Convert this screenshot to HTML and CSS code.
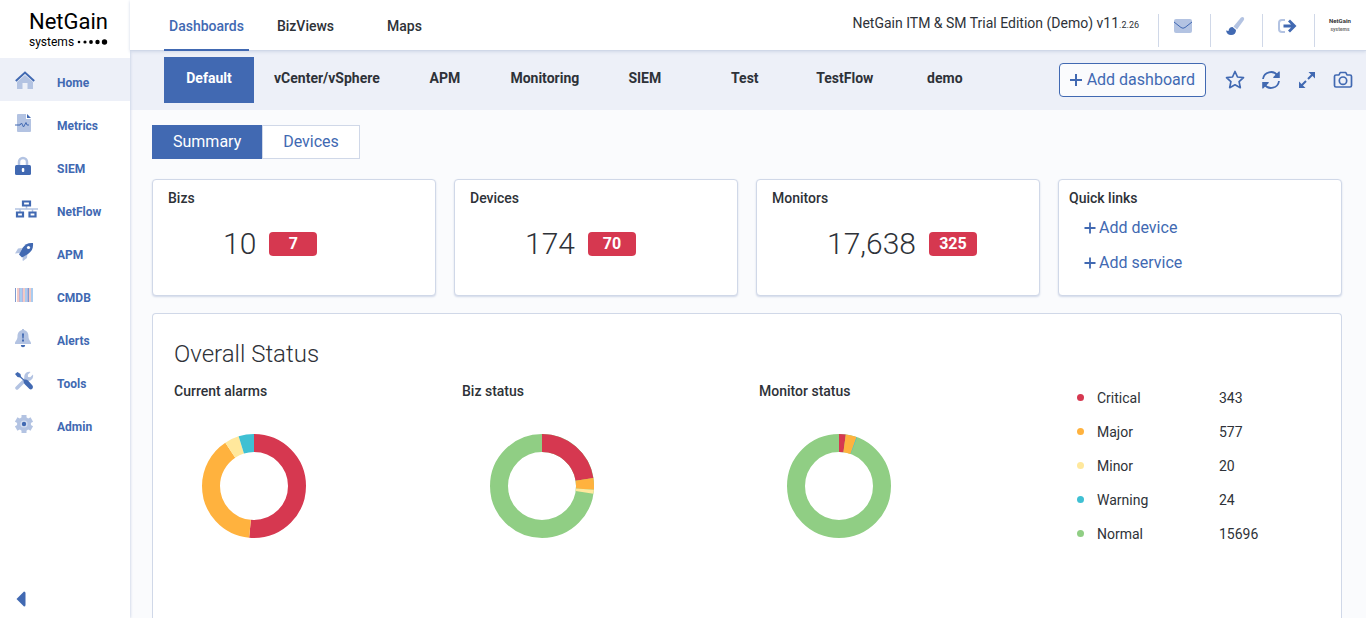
FILE: index.html
```html
<!DOCTYPE html>
<html lang="en">
<head>
    <meta charset="UTF-8">
    <meta name="viewport" content="width=device-width, initial-scale=1.0">
    <title>NetGain Dashboards</title>
    <link rel="stylesheet" href="styles.css">
</head>
<body>
    <aside class="sidebar">
        <a class="logo" href="#">
            <span class="logo-name">NetGain</span>
            <span class="logo-sub">systems
                <svg width="31" height="6" viewBox="0 0 31 6">
                    <circle cx="2" cy="3" r="1.3"/><circle cx="8" cy="3" r="1.6"/><circle cx="14" cy="3" r="1.9"/><circle cx="20.500" cy="3" r="2.2"/><circle cx="27.500" cy="3" r="2.7"/>
                </svg>
            </span>
        </a>
        <nav class="menu">
            <a class="active" href="#">
                <svg width="22" height="20" viewBox="0 0 22 20"><path class="soft" d="M10 5 18 12V19H12.500V13H7.500V19H2V12Z"/><path class="line" stroke-width="2" d="M.8 11 10 2.500 19.200 11"/></svg>
                <span>Home</span>
            </a>
            <a href="#">
                <svg width="22" height="20" viewBox="0 0 22 20"><path class="soft" d="M3 1H11V6H16V18a1 1 0 0 1-1 1H3a1 1 0 0 1-1-1V2a1 1 0 0 1 1-1Z"/><path class="solid" d="M12 1 16 5H12Z"/><path class="line" d="M0 12H5L6.500 10 8.500 14 11 9.500 12 12H14"/></svg>
                <span>Metrics</span>
            </a>
            <a href="#">
                <svg width="22" height="20" viewBox="0 0 22 20"><path class="softline" stroke-width="2.500" d="M4 9V6a4 4 0 0 1 8 0V9"/><rect class="solid" y="9" width="16" height="10" rx="1.500"/><rect fill="#fff" x="6.800" y="12" width="2.500" height="4" rx="1"/></svg>
                <span>SIEM</span>
            </a>
            <a href="#">
                <svg width="23" height="20" viewBox="0 0 23 20"><path class="softline" stroke-width="1.500" d="M0 10H23M11.500 7V10M5 10V13M17.500 10V13"/><path class="line" stroke-width="2.200" d="M8 2.500H15V6.500H8ZM2 13.500H8V17.500H2ZM14.500 13.500H20.500V17.500H14.500Z"/></svg>
                <span>NetFlow</span>
            </a>
            <a href="#">
                <svg width="22" height="20" viewBox="0 0 22 20"><path class="soft" d="M7 6 3 6.500 0 11.500 5 11ZM8 14 12.500 11 12 16 8 19 7.500 18Z"/><path class="solid" d="M18 1C13 .5 10 2.500 7.500 6L4 12.500 7 15.500 13 12C17 9 18.500 6 18 1Z"/><circle fill="#fff" cx="13.500" cy="5.500" r="1.600"/></svg>
                <span>APM</span>
            </a>
            <a href="#">
                <svg width="22" height="20" viewBox="0 0 22 20"><path stroke="#7f9bd0" d="M.5 3V17M13.500 3V17"/><path stroke="#f3c9c4" stroke-width="2" d="M3 3V17M9 3V17M15 3V17"/><path stroke="#a9ccf0" stroke-width="2" d="M6 3V17M11 3V17M17 3V17"/><path stroke="#b6b4dc" d="M4.500 3V17M7.500 3V17M12.500 3V17"/></svg>
                <span>CMDB</span>
            </a>
            <a href="#">
                <svg width="22" height="20" viewBox="0 0 22 20"><path class="soft" d="M7 2V1H9V2C12.500 3 13.500 5.500 13.500 8.500 13.500 12 16 13.500 16 15V16H0V15C0 13.500 2.500 12 2.500 8.500 2.500 5.500 3.500 3 7 2Z"/><path class="solid" d="M7 5.500H9L8.600 10.500H7.400ZM7 11.500H9V13.500H7ZM5.800 17H10.200A2.200 2.200 0 0 1 5.800 17Z"/></svg>
                <span>Alerts</span>
            </a>
            <a href="#">
                <svg width="22" height="20" viewBox="0 0 22 20"><path class="softline" stroke-width="3.500" stroke-linecap="round" d="M2 17 11 8"/><path class="soft" d="M15.500 1 12.800 3.800 13 6 15.200 6.200 18 3.500C19 8 15 11 11.500 9.500L9.500 7.500C8.500 3.500 11.500 0 15.500 1Z"/><path class="solid" d="M0 3 2.500 1 5.500 3 6 5.500 9 8.500Q11.500 8 13 9.500L17.500 14.500Q18.500 16 17.500 17.500 16 19 14.500 18L9.500 13Q8.500 11.500 8.500 9.500L5 6.500 2.500 6Z"/></svg>
                <span>Tools</span>
            </a>
            <a href="#">
                <svg width="22" height="20" viewBox="0 0 22 20"><circle class="soft" cx="9" cy="10" r="7"/><path class="softline" stroke-width="5" d="M9 1V19M1.200 5.500 16.800 14.500M1.200 14.500 16.800 5.500"/><circle cx="9" cy="10" r="3.600" fill="#d5def0"/><circle class="solid" cx="9" cy="10" r="2.200"/></svg>
                <span>Admin</span>
            </a>
        </nav>
        <button class="collapse" aria-label="Collapse menu">
            <svg width="10" height="16" viewBox="0 0 10 16"><path class="solid" d="M8 .5Q9.500 .5 9.500 2V14Q9.500 15.500 8 15.500L.5 8Z"/></svg>
        </button>
    </aside>

    <div class="page">
        <header class="topbar">
            <nav class="sections">
                <a class="active" href="#">Dashboards</a>
                <a href="#">BizViews</a>
                <a href="#">Maps</a>
            </nav>
            <p class="version">NetGain ITM &amp; SM Trial Edition (Demo) v11<small>.2.26</small></p>
            <div class="tools">
                <button aria-label="Messages">
                    <svg width="20" height="20" viewBox="0 0 20 20"><rect class="soft" x="1" y="3" width="18" height="14" rx="2"/><path class="line" d="M1 6 8 11.500Q10 13 12 11.500L19 6"/></svg>
                </button>
                <button aria-label="Theme">
                    <svg width="20" height="20" viewBox="0 0 20 20"><path class="soft" d="M16 1.500Q18 .5 19 2 19.500 3 18.500 4.500L12 13.500 8.500 10.500Z"/><path class="solid" d="M7.500 11 11 14Q11 19 6 19 2 19 1 14.500L3.500 15Q4 11 7.500 11Z"/></svg>
                </button>
                <button aria-label="Log out">
                    <svg width="20" height="20" viewBox="0 0 20 20"><path class="softline" stroke-width="2" d="M8 4H5A3 3 0 0 0 2 7V13A3 3 0 0 0 5 16H8"/><path class="line" stroke-width="2.800" d="M6.500 10H17M12 4.500 17.500 10 12 15.500"/></svg>
                </button>
                <button class="avatar" aria-label="Account">
                    <span>NetGain</span>
                    <small>systems</small>
                </button>
            </div>
        </header>

        <div class="subbar">
            <nav class="boards">
                <a class="active" href="#">Default</a>
                <a href="#">vCenter/vSphere</a>
                <a href="#">APM</a>
                <a href="#">Monitoring</a>
                <a href="#">SIEM</a>
                <a href="#">Test</a>
                <a href="#">TestFlow</a>
                <a href="#">demo</a>
            </nav>
            <button class="add-board">
                <svg width="14" height="14" viewBox="0 0 14 14"><path class="line" stroke-width="2" d="M7 1V13M1 7H13"/></svg>
                Add dashboard
            </button>
            <div class="actions">
                <button aria-label="Favourite">
                    <svg width="20" height="20" viewBox="0 0 20 20"><path class="line" stroke-width="1.700" stroke-linejoin="round" d="M10 1.500 12.500 7 18.500 7.700 14.100 11.700 15.300 17.700 10 14.800 4.700 17.700 5.900 11.700 1.500 7.700 7.500 7Z"/></svg>
                </button>
                <button aria-label="Refresh">
                    <svg width="20" height="20" viewBox="0 0 20 20"><path class="line" stroke-width="1.800" d="M2 9A8 8 0 0 1 16.500 5.500M18 11A8 8 0 0 1 3.500 14.500"/><path class="solid" d="M18.800 1.500V8H12.300V7L17.800 1.500ZM1.200 18.500V12H7.700V13L2.200 18.500Z"/></svg>
                </button>
                <button aria-label="Full screen">
                    <svg width="20" height="20" viewBox="0 0 20 20"><path class="line" stroke-width="2" d="M4 16 9 11M11 9 16 4"/><path class="solid" d="M11.500 2H18V8.500L16 6.500 13.500 4ZM8.500 18H2V11.500L4 13.500 6.500 16Z"/></svg>
                </button>
                <button aria-label="Snapshot">
                    <svg width="20" height="20" viewBox="0 0 20 20"><path class="line" stroke-width="1.700" stroke-linejoin="round" d="M3 5H6L7.200 2.500H12.800L14 5H17Q18.500 5 18.500 6.500V15.500Q18.500 17 17 17H3Q1.500 17 1.500 15.500V6.500Q1.500 5 3 5Z"/><circle class="line" stroke-width="1.700" cx="10" cy="10.700" r="3.700"/></svg>
                </button>
            </div>
        </div>

        <main>
            <div class="views">
                <button class="active">Summary</button>
                <button>Devices</button>
            </div>

            <div class="cards">
                <section class="card">
                    <h2>Bizs</h2>
                    <p class="count">10 <span class="badge">7</span></p>
                </section>
                <section class="card">
                    <h2>Devices</h2>
                    <p class="count">174 <span class="badge">70</span></p>
                </section>
                <section class="card">
                    <h2>Monitors</h2>
                    <p class="count">17,638 <span class="badge">325</span></p>
                </section>
                <section class="card links">
                    <h2>Quick links</h2>
                    <a href="#"><svg width="12" height="12" viewBox="0 0 12 12"><path class="line" stroke-width="1.800" d="M6 .5V11.500M.5 6H11.500"/></svg>Add device</a>
                    <a href="#"><svg width="12" height="12" viewBox="0 0 12 12"><path class="line" stroke-width="1.800" d="M6 .5V11.500M.5 6H11.500"/></svg>Add service</a>
                </section>
            </div>

            <section class="status">
                <h1>Overall Status</h1>
                <div class="charts">
                    <div>
                        <h2>Current alarms</h2>
                        <svg class="donut" viewBox="0 0 104 104">
                            <circle class="critical" cx="52" cy="52" r="43" pathLength="100" stroke-dasharray="51.5 100"/>
                            <circle class="major" cx="52" cy="52" r="43" pathLength="100" stroke-dasharray="39.2 100" stroke-dashoffset="-51.5"/>
                            <circle class="minor" cx="52" cy="52" r="43" pathLength="100" stroke-dasharray="4.5 100" stroke-dashoffset="-90.7"/>
                            <circle class="warning" cx="52" cy="52" r="43" pathLength="100" stroke-dasharray="4.8 100" stroke-dashoffset="-95.2"/>
                        </svg>
                    </div>
                    <div>
                        <h2>Biz status</h2>
                        <svg class="donut" viewBox="0 0 104 104">
                            <circle class="normal" cx="52" cy="52" r="43"/>
                            <circle class="critical" cx="52" cy="52" r="43" pathLength="100" stroke-dasharray="22.5 100"/>
                            <circle class="major" cx="52" cy="52" r="43" pathLength="100" stroke-dasharray="3.7 100" stroke-dashoffset="-22.5"/>
                            <circle class="minor" cx="52" cy="52" r="43" pathLength="100" stroke-dasharray="1.2 100" stroke-dashoffset="-26.2"/>
                        </svg>
                    </div>
                    <div>
                        <h2>Monitor status</h2>
                        <svg class="donut" viewBox="0 0 104 104">
                            <circle class="normal" cx="52" cy="52" r="43"/>
                            <circle class="critical" cx="52" cy="52" r="43" pathLength="100" stroke-dasharray="2.1 100"/>
                            <circle class="major" cx="52" cy="52" r="43" pathLength="100" stroke-dasharray="3.4 100" stroke-dashoffset="-2.1"/>
                            <circle class="warning" cx="52" cy="52" r="43" pathLength="100" stroke-dasharray="0.15 100" stroke-dashoffset="-5.5"/>
                        </svg>
                    </div>
                    <table class="legend">
                        <tr><td><i class="critical"></i></td><th scope="row">Critical</th><td>343</td></tr>
                        <tr><td><i class="major"></i></td><th scope="row">Major</th><td>577</td></tr>
                        <tr><td><i class="minor"></i></td><th scope="row">Minor</th><td>20</td></tr>
                        <tr><td><i class="warning"></i></td><th scope="row">Warning</th><td>24</td></tr>
                        <tr><td><i class="normal"></i></td><th scope="row">Normal</th><td>15696</td></tr>
                    </table>
                </div>
            </section>
        </main>
    </div>
</body>
</html>
```

FILE: styles.css
```css
*{
    box-sizing: border-box;
    margin: 0;
    padding: 0;
}

body{
    display: flex;
    min-height: 100vh;
    font-family: Roboto, sans-serif;
    font-size: 14px;
    color: #2e3238;
    background-color: #fafbfd;
}

a{
    color: #4169b2;
    text-decoration: none;
}

button{
    font: inherit;
    color: #4169b2;
    background: none;
    border: none;
    cursor: pointer;
}

svg{
    display: block;
    flex-shrink: 0;
}

h2{
    font-size: 14px;
    font-weight: 500;
    line-height: 18px;
}

/* two-tone icons */
.solid{
    fill: #4169b2;
}

.soft{
    fill: #b3c3e2;
}

.line{
    fill: none;
    stroke: #4169b2;
}

.softline{
    fill: none;
    stroke: #b3c3e2;
}

/* sidebar */
.sidebar{
    display: flex;
    flex-direction: column;
    flex-shrink: 0;
    width: 130px;
    background-color: #fff;
    box-shadow: 0 0 3px #b9c4dc;
    z-index: 1;
}

.logo{
    height: 58px;
    padding: 9px 0 0 29px;
    color: #000;
}

.logo-name{
    display: block;
    font-size: 22px;
    line-height: 26px;
}

.logo-sub{
    display: flex;
    align-items: center;
    gap: 3px;
    font-size: 12px;
    line-height: 14px;
}

.menu a{
    display: grid;
    grid-template-columns: 42px 1fr;
    align-items: center;
    height: 43px;
    padding-left: 15px;
    font-size: 12px;
    font-weight: 700;
}

.menu a.active{
    background-color: #edf0f8;
}

.menu span{
    padding-top: 6px;
}

.collapse{
    margin-top: auto;
    padding: 0 0 11px 16px;
    align-self: flex-start;
}

/* top bar */
.page{
    display: flex;
    flex-direction: column;
    flex: 1;
    min-width: 0;
}

.topbar{
    display: flex;
    height: 51px;
    padding-left: 34px;
    background-color: #fff;
    border-bottom: 1px solid #d0d8e8;
    box-shadow: 0 1px 3px #d0d8e8;
    z-index: 1;
}

.sections{
    display: flex;
    gap: 14px;
}

.sections a{
    width: 85px;
    height: 51px;
    line-height: 52px;
    text-align: center;
    font-weight: 500;
    color: #2e3238;
}

.sections a.active{
    color: #4169b2;
    border-bottom: 2px solid #4169b2;
}

.version{
    margin-left: auto;
    padding-right: 19px;
    line-height: 46px;
}

.version small{
    font-size: 9px;
}

.tools{
    display: flex;
    padding-top: 14px;
}

.tools button{
    display: flex;
    justify-content: center;
    width: 52px;
    height: 33px;
    padding: 2px 4px 0 0;
    border-left: 1px solid #d0d8e8;
}

.tools .avatar{
    flex-direction: column;
    justify-content: flex-start;
    align-items: center;
    padding-right: 1px;
    font-size: 6px;
    font-weight: 700;
    line-height: 10px;
    color: #333;
}

.avatar small{
    font-size: 5px;
    line-height: 6px;
    color: #777;
}

/* dashboard bar */
.subbar{
    display: flex;
    align-items: center;
    height: 59px;
    padding: 0 13px 2px 34px;
    background-color: #edf0f8;
}

.boards{
    display: flex;
    gap: 10px;
}

.boards a{
    min-width: 90px;
    height: 46px;
    padding: 0 10px;
    line-height: 42px;
    text-align: center;
    font-weight: 700;
    color: #2e3238;
}

.boards a.active{
    color: #fff;
    background-color: #4169b2;
}

.add-board{
    display: flex;
    align-items: center;
    gap: 4px;
    height: 34px;
    margin-left: auto;
    padding: 0 10px 0 9px;
    font-size: 16px;
    background-color: #fafbfd;
    border: 1px solid #4169b2;
    border-radius: 4px;
}

.actions{
    display: flex;
    gap: 16px;
    margin-left: 19px;
}

/* content */
main{
    display: flex;
    flex-direction: column;
    flex: 1;
    padding: 15px 24px 0 22px;
}

.views{
    display: flex;
}

.views button{
    height: 34px;
    padding: 0 20px;
    font-size: 16px;
    line-height: 30px;
    background-color: #fff;
    border: 1px solid #d0d8e8;
}

.views button.active{
    color: #fff;
    background-color: #4169b2;
    border-color: #4169b2;
}

.cards{
    display: grid;
    grid-template-columns: repeat(4, 1fr);
    gap: 18px;
    margin: 20px 0 17px;
}

.card{
    min-height: 117px;
    padding: 9px 15px;
    background-color: #fff;
    border: 1px solid #d0d8e8;
    border-radius: 4px;
    box-shadow: 0 1px 2px #d0d8e8;
}

.count{
    display: flex;
    align-items: center;
    gap: 13px;
    margin-top: 18px;
    padding-left: 55px;
    font-size: 30px;
    font-weight: 300;
    line-height: 38px;
}

.badge{
    width: 48px;
    height: 24px;
    border-radius: 4px;
    background-color: #d63850;
    color: #fff;
    font-size: 16px;
    font-weight: 700;
    line-height: 24px;
    text-align: center;
}

.links{
    padding-left: 10px;
}

.links a{
    display: flex;
    align-items: center;
    gap: 3px;
    height: 35px;
    padding-left: 15px;
    font-size: 16px;
}

.links h2{
    margin-bottom: 3px;
}

/* overall status */
.status{
    flex: 1;
    padding: 22px 20px 40px 21px;
    background-color: #fff;
    border: 1px solid #d0d8e8;
    border-bottom: none;
    border-radius: 4px 4px 0 0;
}

.status h1{
    font-size: 24px;
    font-weight: 300;
    line-height: 36px;
}

.charts{
    display: grid;
    grid-template-columns: 288fr 297fr 318fr 244fr;
    align-items: start;
    padding-top: 10px;
}

.donut{
    width: 104px;
    margin: 34px 0 0 28px;
    fill: none;
    stroke-width: 18;
    transform: rotate(-90deg);
}

.critical{
    stroke: #d63850;
    background-color: #d63850;
}

.major{
    stroke: #ffb23e;
    background-color: #ffb23e;
}

.minor{
    stroke: #ffe89c;
    background-color: #ffe89c;
}

.warning{
    stroke: #3fc0d3;
    background-color: #3fc0d3;
}

.normal{
    stroke: #90ce84;
    background-color: #90ce84;
}

.legend{
    border-collapse: collapse;
    text-align: left;
}

.legend td,
.legend th{
    height: 34px;
    padding-bottom: 2px;
    font-weight: 400;
}

.legend td:first-child{
    width: 20px;
    padding-bottom: 4px;
}

.legend th{
    width: 122px;
}

.legend i{
    display: block;
    width: 7px;
    height: 7px;
    border-radius: 50%;
}
```
